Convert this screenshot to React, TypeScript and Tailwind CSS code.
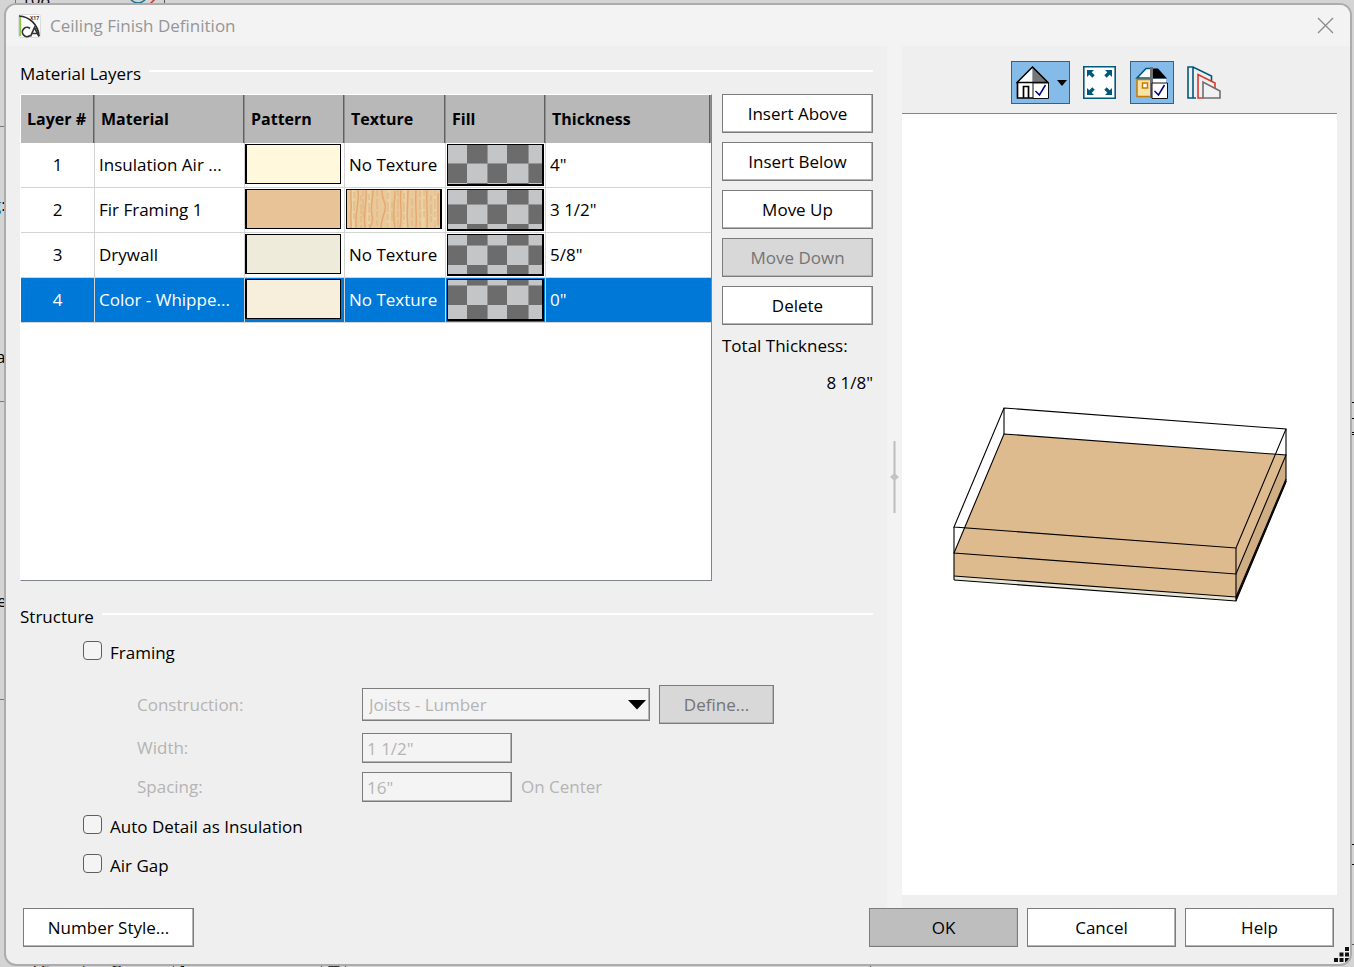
import { ReactNode } from "react"
import clsx from "clsx"

const layers = [
  { id: 1, material: "Insulation Air ...", pattern: "bg-[#fff8dc]", wood: false, thickness: '4"', split: 18 },
  { id: 2, material: "Fir Framing 1", pattern: "bg-[#e8c398]", wood: true, thickness: '3 1/2"', split: 14 },
  { id: 3, material: "Drywall", pattern: "bg-[#eeebdb]", wood: false, thickness: '5/8"', split: 10 },
  { id: 4, material: "Color - Whippe...", pattern: "bg-[#f8eedc]", wood: false, thickness: '0"', split: 5 },
]

const columns = ["Layer #", "Material", "Pattern", "Texture", "Fill", "Thickness"]

type ButtonProps = {
  children: ReactNode
  className?: string
  disabled?: boolean
}

const DialogButton = ({ children, className, disabled }: ButtonProps) => {
  return (
    <button
      type="button"
      disabled={disabled}
      className={clsx(
        "h-[39px] border border-[#7c7c7c] shadow-[inset_-1px_-1px_0_#b4b4b4] text-center",
        disabled ? "bg-[#d8d8d8] text-[#747474]" : "text-black",
        className
      )}
    >
      {children}
    </button>
  )
}

const SectionTitle = ({ children }: { children: ReactNode }) => {
  return (
    <div className="flex h-5 gap-2">
      <h2 className="leading-5">{children}</h2>
      <div className="mt-1.5 h-0.5 flex-1 bg-white" />
    </div>
  )
}

const CheckRow = ({ id, label, className }: { id: string; label: string; className?: string }) => {
  return (
    <div className={clsx("flex items-start gap-2 pl-[63px]", className)}>
      <input
        id={id}
        type="checkbox"
        className="h-[19px] w-[19px] appearance-none rounded-[4px] border border-[#5f5f5f] bg-[#f4f4f4] checked:bg-[#0078d7]"
      />
      <label htmlFor={id} className="leading-6">{label}</label>
    </div>
  )
}

const AppLogo = () => {
  return (
    <svg width="23" height="24" viewBox="0 0 23 24" aria-hidden="true">
      <rect x=".5" y=".5" width="22" height="23" rx="2" fill="#fff" stroke="#dcdcdc" />
      <path d="M2.200 3v19" stroke="#8dc63f" strokeWidth="2" />
      <path d="M1 2c10 .5 19 8 20 20" fill="none" stroke="#2b2b2b" strokeWidth="1.700" />
      <path d="M12 14.500a4.600 4.600 0 1 0 0 7" fill="none" stroke="#333" strokeWidth="1.700" />
      <path d="M12.500 22.500l4-9 4.500 9M14 19.500h5.500" fill="none" stroke="#333" strokeWidth="1.700" />
      <text x="12" y="5.500" fontSize="5" fontWeight="700" fontFamily="Open Sans, sans-serif" fill="#333">X17</text>
    </svg>
  )
}

const Wood = () => {
  return (
    <svg width="94" height="38" viewBox="0 0 94 38" className="block" aria-hidden="true">
      <rect width="94" height="38" fill="#e9c99a" />
      <g fill="none" stroke="#ead3a4" strokeWidth="3">
        <path d="M6 0v38M22 0c1 12-2 25 0 38M42 0v38M58 0v38M76 0v38M88 0v38" />
      </g>
      <g fill="none" stroke="#e6a873" strokeWidth="1.500">
        <path d="M4 0c-1 9 1 15 0 22s1 10 0 16M11 0c2 10-3 20-2 38M19 0c1 12-3 24-1 38" />
        <path d="M26 0c0 10-3 18-1 25s-1 9-2 13M35 0c-1 9 5 12 3 20s-4 11-4 18" />
        <path d="M48 1c0 12-3 20 0 37M54 0c-2 9 2 23-1 38M61 0c0 14-2 24 0 38" />
        <path d="M69 0c-1 16 1 24 0 38M80 0c-1 12 1 20 0 38M91 3v32" />
      </g>
      <g fill="none" stroke="#dfb27c" strokeWidth="1" strokeDasharray="6 3 10 2">
        <path d="M7 2v30M14 5v33M16 0v30M22 4v34M30 0v36M41 3v35M45 12v20M51 0v38M57 3v31M65 9v29M73 1v37M77 0v28M84 5v30M88 0v38" />
      </g>
    </svg>
  )
}

// transparent fill, the checks keep running from one row into the next
const Checker = ({ split }: { split: number }) => {
  const rows = [
    { y: 0, h: split, odd: 0 },
    { y: split, h: 20, odd: 1 },
    { y: split + 20, h: 20, odd: 0 },
  ]
  const cols = [0, 19, 39, 59, 80]
  return (
    <svg width="94" height="39" viewBox="0 0 94 39" className="block" aria-hidden="true">
      {rows.map((row) =>
        cols.map((x, i) => (
          <rect key={`${row.y}-${x}`} x={x} y={row.y} width="21" height={row.h} fill={(i + row.odd) % 2 ? "#6c6c6c" : "#c4c5c7"} />
        ))
      )}
      <path d={`M0 ${split + 0.5}H94M39.500 0V39M80.500 0V39`} stroke="#939393" />
    </svg>
  )
}

const HouseIcon = () => {
  return (
    <svg width="33" height="33" viewBox="0 0 33 33" aria-hidden="true">
      <path d="M16.500 1L1 16.500h15.500z" fill="#fff" />
      <path d="M16.500 1v15.500H32z" fill="#777" />
      <path d="M1 17h16v15H1z" fill="#fff" />
      <path d="M1 16.500L16.500 1 32 16.500z" fill="none" stroke="#000" strokeWidth="1.500" />
      <path d="M1.500 16v16H17M7.500 32V20.500h5V32" fill="none" stroke="#000" strokeWidth="1.700" />
      <path d="M17 17h15.500v15.500H17z" fill="#fff" stroke="#111" />
      <path d="M19.500 25l4 4 6-10" fill="none" stroke="#00008b" strokeWidth="1.500" />
    </svg>
  )
}

const ExtentsIcon = () => {
  return (
    <svg width="33" height="33" viewBox="0 0 33 33" aria-hidden="true">
      <path d="M.8.8h31.400v31.400H.8z" fill="#fff" stroke="#00597d" strokeWidth="1.600" />
      <path d="M4 4h7l-2.300 2.300 3 3-2.400 2.400-3-3L4 11zM29 4h-7l2.300 2.300-3 3 2.400 2.400 3-3L29 11zM4 29h7l-2.300-2.300 3-3-2.400-2.400-3 3L4 22zM29 29h-7l2.300-2.300-3-3 2.400-2.400 3 3L29 22z" fill="#00597d" />
    </svg>
  )
}

const SplitHouseIcon = () => {
  return (
    <svg width="33" height="33" viewBox="0 0 33 33" aria-hidden="true">
      <path d="M12 2.500h4V12H2z" fill="#fff" />
      <path d="M16 2.500h-5L2 12h14" fill="none" stroke="#00597d" strokeWidth="1.600" />
      <path d="M17 2.500h6l9 10H17z" fill="#000" />
      <path d="M2 13.500h14v17H2z" fill="#f8e3a5" stroke="#c77800" strokeWidth="1.500" />
      <path d="M7.500 17h5v5h-5z" fill="#fff" stroke="#c77800" strokeWidth="1.500" />
      <path d="M17 13h14v6H17z" fill="#fff" />
      <path d="M15 1h3v31h-3z" fill="#727272" />
      <path d="M17 17h15.500v15.500H17z" fill="#fff" stroke="#111" />
      <path d="M19.500 25l4 4 6-10" fill="none" stroke="#00008b" strokeWidth="1.500" />
    </svg>
  )
}

const LayersIcon = () => {
  return (
    <svg width="34" height="33" viewBox="0 0 34 33" aria-hidden="true">
      <path d="M9 32H1V1h5l18.500 9v6M6 1v31" fill="none" stroke="#00597d" strokeWidth="1.600" />
      <path d="M16 32h-5V8.500L28 17v6" fill="none" stroke="#d93a2b" strokeWidth="1.600" />
      <path d="M16 16v16h17v-7z" fill="#f1f1f1" stroke="#6e6e6e" strokeWidth="1.600" />
    </svg>
  )
}

const Preview = () => {
  return (
    <svg width="336" height="197" viewBox="0 0 336 197" role="img" aria-label="Layer preview">
      <path d="M52 28L334 49v27L284 195 2 174v-27z" fill="#debb8f" />
      <path d="M334 49v25L284 191v-23z" fill="#cfae84" />
      <path d="M2 170l282 21v4L2 174z" fill="#e6e4d3" />
      <g fill="none" stroke="#000" strokeWidth="1.100">
        <path d="M52 2l282 21L284 142 2 121z" />
        <path d="M52 28l282 21L284 168 2 147z" />
        <path d="M52 2v26M334 23v53M2 121v53M284 142v53" />
        <path d="M2 170l282 21L334 73" />
        <path d="M2 174l282 21L334 76" />
        <path d="M284 193L334 75" />
      </g>
    </svg>
  )
}

// bits of the plan window that stick out round the dialog
const Backdrop = () => {
  return (
    <div aria-hidden="true" className="absolute inset-0 overflow-hidden bg-[#d4d4d4]">
      <span className="absolute left-[21px] -top-[11px] text-[17px] leading-5">108</span>
      <div className="absolute left-[15px] top-0 h-1 w-px bg-[#777]" />
      <div className="absolute left-[164px] top-0 h-1 w-px bg-[#555]" />
      <svg width="28" height="4" className="absolute left-[130px] top-0">
        <path d="M1 0q7 6 14 0" fill="none" stroke="#16708f" strokeWidth="1.500" />
        <path d="M20 4l5-5" stroke="#c33" strokeWidth="1.500" />
      </svg>
      <div className="absolute left-0 top-[126px] h-px w-2 bg-[#777]" />
      <span className="absolute -left-2 top-[195px] text-[17px] leading-5"><span className="text-[#0078d7]">g</span>:</span>
      <span className="absolute -left-[4px] top-[347px] text-[17px] leading-5">a</span>
      <div className="absolute left-0 top-[401px] h-px w-2 bg-[#777]" />
      <span className="absolute -left-[3px] top-[591px] text-[17px] leading-5">e</span>
      <div className="absolute left-0 top-[699px] h-px w-2 bg-[#777]" />
      <div className="absolute right-0 top-[402px] h-px w-2 bg-black" />
      <div className="absolute right-0 top-[418px] h-px w-2 bg-black" />
      <div className="absolute right-0 top-[432px] h-[3px] w-2 border-y border-black" />
      <div className="absolute right-0 top-[844px] h-px w-2 bg-black" />
      <div className="absolute right-0 top-[864px] h-px w-2 bg-black" />
      <div className="absolute right-0 top-[944px] h-px w-2 bg-[#555]" />
      <span className="absolute left-[30px] -bottom-[14px] text-[17px] leading-5">/ Framing Group</span>
      <div className="absolute left-[173px] bottom-0 h-1 w-px bg-[#444]" />
      <span className="absolute left-[178px] -bottom-[14px] text-[17px] leading-5">1</span>
      <div className="absolute left-[321px] bottom-0 h-1 w-px bg-[#444]" />
      <div className="absolute left-[328px] -bottom-2 h-3 w-3 rounded-full bg-[#333]" />
      <div className="absolute left-[345px] bottom-0 h-1 w-px bg-[#444]" />
      <div className="absolute left-[870px] bottom-0 h-1 w-px bg-[#444]" />
    </div>
  )
}

const LayerTable = () => {
  return (
    <div className="min-w-0 flex-1 border border-t-white border-l-white border-r-[#80858f] border-b-[#80858f] bg-white">
      <table className="w-full table-fixed border-separate border-spacing-0 text-left">
        <colgroup>
          <col className="w-[74px]" />
          <col className="w-[150px]" />
          <col className="w-[100px]" />
          <col className="w-[101px]" />
          <col className="w-[100px]" />
          <col />
        </colgroup>
        <thead>
          <tr className="h-12 bg-[#b8b8b8]">
            {columns.map((name) => (
              <th key={name} className="whitespace-nowrap px-1.5 text-base font-bold shadow-[inset_-1px_0_0_#8f8f8f,inset_-2px_0_0_#606060]">
                {name}
              </th>
            ))}
          </tr>
        </thead>
        <tbody>
          {layers.map((layer) => {
            const cell = "h-[45px] whitespace-nowrap border-r border-b border-[#d4d4d4] p-0"
            return (
              <tr key={layer.id} className={layer.id === 4 ? "bg-[#0078d7] text-white" : "bg-white"}>
                <td className={clsx(cell, "text-center")}>{layer.id}</td>
                <td className={clsx(cell, "pl-1")}>{layer.material}</td>
                <td className={clsx(cell, "align-top pt-px")}>
                  <div className={clsx("h-10 w-24 border border-l-2 border-black", layer.pattern)} />
                </td>
                <td className={clsx(cell, layer.wood ? "align-top pt-px pl-px" : "pl-1")}>
                  {layer.wood ? (
                    <div className="h-10 w-24 overflow-hidden border border-r-2 border-black"><Wood /></div>
                  ) : (
                    "No Texture"
                  )}
                </td>
                <td className={clsx(cell, "align-top pt-px pl-px")}>
                  <div className="h-[42px] w-[97px] overflow-hidden border border-r-2 border-b-2 border-black"><Checker split={layer.split} /></div>
                </td>
                <td className={clsx(cell, "border-r-0 pl-1")}>{layer.thickness}</td>
              </tr>
            )
          })}
        </tbody>
      </table>
    </div>
  )
}

const Field = "h-[30px] w-[150px] border border-[#7c7c7c] bg-[#f4f4f4] px-1 text-[#b4b4b4] shadow-[inset_-1px_-1px_0_#b4b4b4]"

const App = () => {
  return (
    <div className="relative h-screen min-h-[760px] min-w-[1100px] pl-1 pr-0.5 pt-[3px] pb-px font-['Open_Sans',sans-serif] text-[17px] text-black">
      <Backdrop />

      <div role="dialog" aria-labelledby="dialog-title" className="relative flex h-full flex-col overflow-hidden rounded-xl border-2 border-[#acacac] bg-[#efefef]">
        <header className="flex h-[41px] shrink-0 items-center gap-[9px] bg-[#f3f3f3] pl-3 pr-4">
          <AppLogo />
          <h1 id="dialog-title" className="flex-1 text-[#969696]">Ceiling Finish Definition</h1>
          <button type="button" aria-label="Close">
            <svg width="17" height="17" viewBox="0 0 17 17">
              <path d="M1 1l15 15M16 1L1 16" stroke="#8a8a8a" strokeWidth="1.300" />
            </svg>
          </button>
        </header>

        <main className="flex min-h-0 flex-1">
          <div className="flex min-w-0 flex-1 flex-col pt-[18px] pb-[30px] pl-3.5 pr-3.5">
            <SectionTitle>Material Layers</SectionTitle>
            <div className="mt-2.5 flex min-h-0 flex-1 gap-2.5">
              <LayerTable />
              <div className="flex w-[151px] flex-col gap-[9px]">
                <DialogButton className="bg-white">Insert Above</DialogButton>
                <DialogButton className="bg-white">Insert Below</DialogButton>
                <DialogButton className="bg-white">Move Up</DialogButton>
                <DialogButton disabled>Move Down</DialogButton>
                <DialogButton className="bg-white">Delete</DialogButton>
                <div className="leading-6">Total Thickness:</div>
                <div className="text-right leading-8">8 1/8"</div>
              </div>
            </div>

            <div className="mt-[26px]">
              <SectionTitle>Structure</SectionTitle>
              <CheckRow id="framing" label="Framing" className="mt-3.5" />
              <div className="mt-5 flex flex-col gap-[9px] pl-[117px] text-[#b4b4b4]">
                <div className="flex items-center">
                  <label htmlFor="construction" className="w-[225px]">Construction:</label>
                  <div className="relative">
                    <select
                      id="construction"
                      disabled
                      className="block h-[33px] w-[288px] appearance-none border border-[#7c7c7c] bg-[#f4f4f4] pl-1.5 pr-8 text-[#b4b4b4] shadow-[inset_-1px_-1px_0_#b4b4b4] disabled:opacity-100"
                    >
                      <option>Joists - Lumber</option>
                    </select>
                    <svg width="18" height="10" viewBox="0 0 18 10" className="pointer-events-none absolute right-1 top-3" aria-hidden="true">
                      <path d="M0 0h18L9 9.500z" fill="#000" />
                    </svg>
                  </div>
                  <DialogButton disabled className="ml-[9px] w-[115px]">Define...</DialogButton>
                </div>
                <div className="flex items-center">
                  <label htmlFor="width" className="w-[225px]">Width:</label>
                  <input id="width" disabled defaultValue={'1 1/2"'} className={Field} />
                </div>
                <div className="flex items-center">
                  <label htmlFor="spacing" className="w-[225px]">Spacing:</label>
                  <input id="spacing" disabled defaultValue={'16"'} className={Field} />
                  <span className="ml-[9px]">On Center</span>
                </div>
              </div>
              <CheckRow id="insulation" label="Auto Detail as Insulation" className="mt-[13px]" />
              <CheckRow id="airgap" label="Air Gap" className="mt-[15px]" />
            </div>
          </div>

          <div className="flex w-[15px] items-center justify-center bg-[#f3f3f3]">
            <svg width="9" height="72" viewBox="0 0 9 72" aria-hidden="true">
              <path d="M3.500 0h2v72h-2z" fill="#bdbdbd" />
              <path d="M4.500 32L9 36l-4.500 4L0 36z" fill="#c4c4c4" />
            </svg>
          </div>

          <div className="mr-[13px] mb-[13px] flex w-[435px] flex-col">
            <div className="flex h-[67px] shrink-0 justify-center gap-2 pt-[15px] pr-[3px]">
              <button type="button" aria-label="House display" className="flex h-[43px] w-[59px] items-center gap-2 border border-[#3c5f80] bg-[#85bbe8] pl-1">
                <HouseIcon />
                <svg width="10" height="6" viewBox="0 0 10 6">
                  <path d="M0 0h10L5 6z" fill="#000" />
                </svg>
              </button>
              <button type="button" aria-label="Fill window" className="flex h-[43px] w-11 items-center justify-center"><ExtentsIcon /></button>
              <button type="button" aria-label="Toggle color" className="flex h-[43px] w-11 items-center justify-center border border-[#3c5f80] bg-[#85bbe8]"><SplitHouseIcon /></button>
              <button type="button" aria-label="Layers" className="flex h-[43px] w-11 items-center justify-center"><LayersIcon /></button>
            </div>
            <div className="flex flex-1 items-center justify-center border-t border-[#80858f] bg-white">
              <Preview />
            </div>
          </div>
        </main>

        <footer className="flex shrink-0 gap-[9px] pb-[17px] pl-[17px] pr-4">
          <DialogButton className="w-[171px] bg-white">Number Style...</DialogButton>
          <div className="flex-1" />
          <DialogButton className="w-[149px] bg-[#bebebe]">OK</DialogButton>
          <DialogButton className="w-[149px] bg-white">Cancel</DialogButton>
          <DialogButton className="w-[149px] bg-white">Help</DialogButton>
        </footer>

        <svg width="15" height="15" viewBox="0 0 15 15" className="absolute right-px bottom-0.5" aria-hidden="true">
          <path d="M0 11h4v4H0zM5.500 11h4v4h-4zM11 11h4v4h-4zM5.500 5.500h4v4h-4zM11 5.500h4v4h-4zM11 0h4v4h-4z" fill="#111" />
        </svg>
      </div>
    </div>
  )
}

export default App
